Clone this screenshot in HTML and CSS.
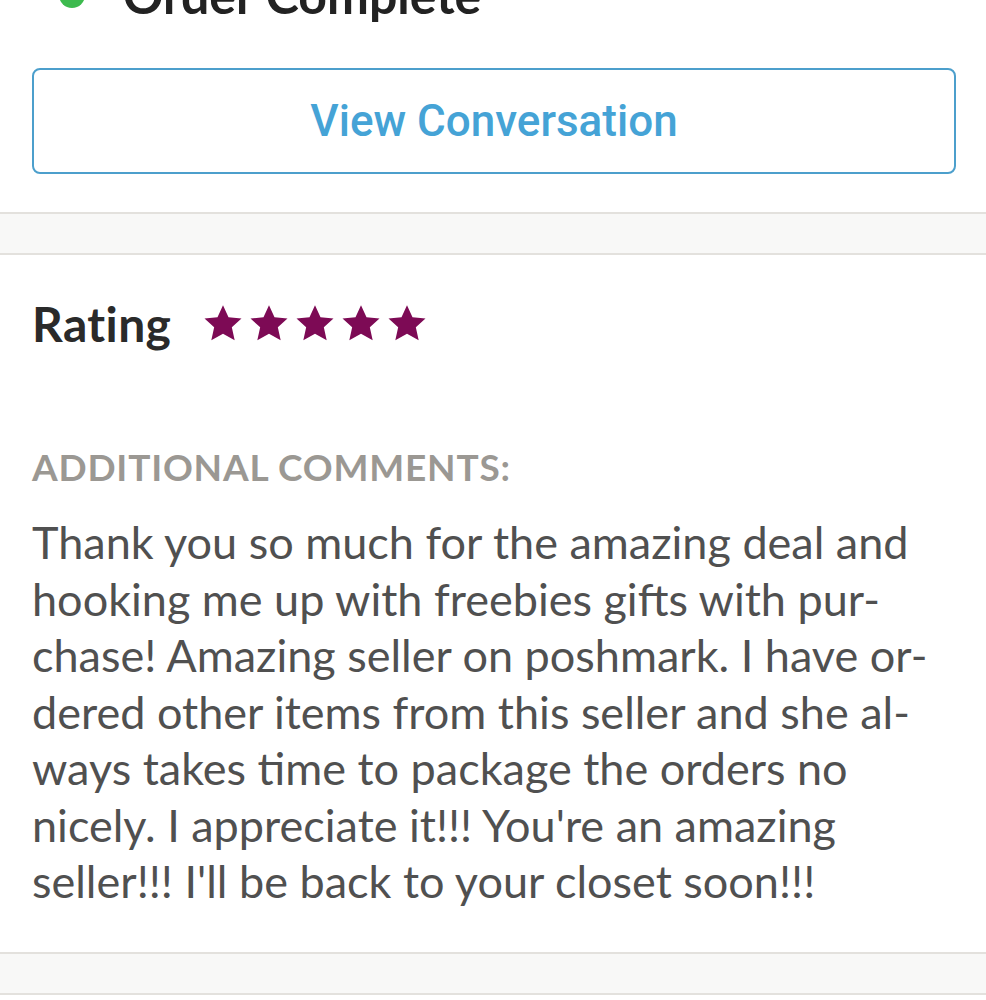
FILE: index.html
```html
<!doctype html>
<html lang="en">
  <head>
    <meta charset="UTF-8" />
    <meta name="viewport" content="width=device-width, initial-scale=1.0" />
    <title>Order Details</title>
    <link rel="stylesheet" href="styles.css">
  </head>
  <body>
    <div class="orderSection">
      <div class="orderStatus">
        <span class="statusDot"></span>
        <h2>Order Complete</h2>
      </div>
      <button class="conversationButton">View Conversation</button>
    </div>

    <div class="spacer"></div>

    <div class="ratingSection">
      <div class="ratingRow">
        <h3>Rating</h3>
        <div class="stars">
          <svg viewBox="0 0 24 24"><path d="M12 .8l3.3 7.1 7.8.8-5.8 5.3 1.7 7.7L12 17.8l-7 3.9 1.7-7.7L.9 8.7l7.8-.8z"/></svg>
          <svg viewBox="0 0 24 24"><path d="M12 .8l3.3 7.1 7.8.8-5.8 5.3 1.7 7.7L12 17.8l-7 3.9 1.7-7.7L.9 8.7l7.8-.8z"/></svg>
          <svg viewBox="0 0 24 24"><path d="M12 .8l3.3 7.1 7.8.8-5.8 5.3 1.7 7.7L12 17.8l-7 3.9 1.7-7.7L.9 8.7l7.8-.8z"/></svg>
          <svg viewBox="0 0 24 24"><path d="M12 .8l3.3 7.1 7.8.8-5.8 5.3 1.7 7.7L12 17.8l-7 3.9 1.7-7.7L.9 8.7l7.8-.8z"/></svg>
          <svg viewBox="0 0 24 24"><path d="M12 .8l3.3 7.1 7.8.8-5.8 5.3 1.7 7.7L12 17.8l-7 3.9 1.7-7.7L.9 8.7l7.8-.8z"/></svg>
        </div>
      </div>

      <div class="commentsLabel">ADDITIONAL COMMENTS:</div>
      <p class="comments">Thank you so much for the amazing deal and<br>hooking me up with freebies gifts with pur-<br>chase! Amazing seller on poshmark. I have or-<br>dered other items from this seller and she al-<br>ways takes time to package the orders no<br>nicely. I appreciate it!!! You're an amazing<br>seller!!! I'll be back to your closet soon!!!</p>
    </div>

    <div class="spacer"></div>
  </body>
</html>
```

FILE: styles.css
```css
body {
  margin: 0;
  font-family: 'Lato', sans-serif;
  background: #fff;
  overflow: hidden;
}

.orderSection {
  padding: 0 30px 38px 32px;
  margin-top: -26px;
}

.orderStatus {
  display: flex;
  align-items: center;
  height: 42px;
  padding-left: 27px;
  margin-bottom: 52px;
}
.statusDot {
  width: 26px;
  height: 26px;
  border-radius: 50%;
  background: #3dba4e;
  margin-right: 38px;
}
.orderStatus h2 {
  margin: 0;
  font-size: 50px;
  font-weight: 700;
  color: #222;
}

.conversationButton {
  display: block;
  width: 100%;
  height: 106px;
  background: #fff;
  border: 2px solid #4c9fcc;
  border-radius: 8px;
  font-family: 'Roboto', sans-serif;
  font-weight: 500;
  font-size: 44px;
  color: #45a3d6;
}

.spacer {
  height: 39px;
  background: #f8f8f7;
  border-top: 2px solid #e3e1dd;
  border-bottom: 2px solid #e3e1dd;
}

.ratingSection {
  padding: 40px 32px 42px;
}

.ratingRow {
  display: flex;
  align-items: center;
  gap: 32px;
}
.ratingRow h3 {
  margin: 0;
  font-size: 48px;
  font-weight: 700;
  letter-spacing: 0.4px;
  color: #2a2a2a;
}
.stars {
  display: flex;
  gap: 6px;
}
.stars svg {
  width: 40px;
  height: 40px;
  fill: #7d0a55;
}

.commentsLabel {
  margin-top: 92px;
  font-size: 37px;
  font-weight: 700;
  letter-spacing: 0.8px;
  color: #9b9893;
}

.comments {
  margin: 25px 0 0;
  font-size: 45px;
  line-height: 56.5px;
  color: #505050;
}
```
